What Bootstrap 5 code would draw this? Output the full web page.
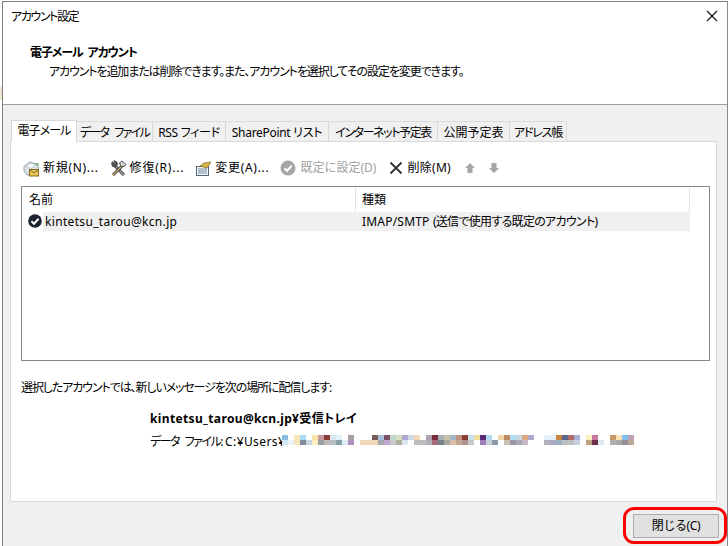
<!DOCTYPE html>
<html lang="ja"><head><meta charset="utf-8"><title>アカウント設定</title>
<link href="https://cdn.jsdelivr.net/npm/bootstrap@5.3.0/dist/css/bootstrap.min.css" rel="stylesheet">
<style>
html,body{margin:0;width:728px;height:546px;overflow:hidden;background:#fff}
body{font-family:"Noto Sans","Noto Sans CJK JP",sans-serif;font-size:12px;line-height:16px;color:#000;font-feature-settings:"palt";padding:1px 0 0 2px;position:relative}
.edge-tan{position:absolute;left:0;top:87px;width:2px;height:13px;background:#efe6d2}
.dlg{width:726px;height:545px;border:1px solid #7f7f7f;border-right-color:#8a8a8a;border-bottom:0;position:relative;background:#f0f0f0}
.dlg-head{height:103px;background:#fff;border-bottom:1px solid #a0a0a0;padding:7px 9px 0 8px}
.dlg-title{height:16px}
.dlg-title span{letter-spacing:-1.4px}
.x-btn{width:12px;height:12px;margin-top:1px}
.dlg-h{font-weight:700;margin:18px 0 0 19px;height:20px;line-height:20px;letter-spacing:-1.1px;word-spacing:3px}
.dlg-sub{margin:-1px 0 0 38px;height:20px;line-height:20px;letter-spacing:-1.1px;white-space:nowrap}
.tabs-wrap{padding:14px 10px 0 7px}
.nav-tabs.acct{border-bottom:0;height:22px;--bs-nav-tabs-border-width:0;align-items:flex-end;padding-left:1px;flex-wrap:nowrap}
.acct .nav-link{height:20px;padding:2px 0 0;text-align:center;color:#000;background:#f0f0f0;border:1px solid #d9d9d9;border-bottom:0;border-left:0;border-radius:0;margin:0;font-size:12px;line-height:18px;white-space:nowrap}
.acct .nav-link.active{height:22px;background:#fff;border:1px solid #d9d9d9;border-bottom:0;position:relative;z-index:2;margin-bottom:-1px;line-height:18px;padding-top:1px;color:#000}
.w1{width:66px;letter-spacing:-.9px}.w2{width:76px;letter-spacing:-1.6px;word-spacing:4px}.w3{width:73px;letter-spacing:-.3px}.w4{width:103px;letter-spacing:-.3px}.w5{width:109px;letter-spacing:-1.4px}.w6{width:72px}.w7{width:57px;letter-spacing:-1.2px}
.panel{height:361px;width:707px;background:#fff;border:1px solid #d9d9d9;padding:0 7px 0 10px}
.tools{height:44px;padding:8px 0 0 2px;align-items:center}
.tools .btn{--bs-btn-padding-x:0;--bs-btn-padding-y:0;--bs-btn-border-width:0;--bs-btn-font-size:12px;--bs-btn-line-height:16px;--bs-btn-color:#000;--bs-btn-disabled-color:#a0a0a0;--bs-btn-disabled-opacity:1;display:flex;align-items:center;gap:3px;border-radius:0;white-space:nowrap}
.tools svg{flex:none}
.mt1{margin-right:11px;letter-spacing:.7px}.mt2{margin-right:11px;letter-spacing:.8px}.mt3{margin-right:11px;letter-spacing:.7px}.mt4{margin-right:13px;gap:4px!important}.mt5{margin-right:14px;letter-spacing:.3px;gap:4px!important}.mt6{margin-right:14px}
.listbox{height:175px;width:689px;border:1px solid #828790}
.lb-row{height:25px;margin-right:19px}
.lb-c1{width:334px;padding:5px 0 0 7px;border-right:1px solid #e5e5e5;flex:none}
.lb-c2{flex:1;padding:5px 0 0 6px;border-right:1px solid #e5e5e5}
.lb-sel{height:19px;margin-right:19px;position:relative;line-height:19px}
.lb-ic{width:21px;flex:none;padding:2px 0 0 6px;background:#fff;height:19px}
.lb-c3{width:313px;flex:none;background:#f0f0f0;padding-left:2px;letter-spacing:.33px}
.lb-c4{flex:1;background:#f0f0f0;padding-left:6px;white-space:nowrap}
.ls-a{letter-spacing:.2px}.ls-b{letter-spacing:-.7px}
.deliv{margin:19px 0 0;height:16px;letter-spacing:-1.1px;white-space:nowrap}
.dest{margin:15px 0 0 129px}
.dest-b{font-weight:700;height:16px;letter-spacing:.35px;white-space:nowrap}
.dest-f{margin-top:7px;height:16px;white-space:nowrap;position:relative}
.ls-c{letter-spacing:-1.5px;word-spacing:4px}.ls-d{letter-spacing:.4px}
.blur{position:absolute;left:132px;top:-3px}
.foot{padding:12px 0 0 630px}
.btn.close-b{--bs-btn-bg:#e1e1e1;--bs-btn-border-color:#adadad;--bs-btn-color:#000;--bs-btn-padding-x:0;--bs-btn-padding-y:0;--bs-btn-font-size:12px;--bs-btn-line-height:22px;--bs-btn-border-radius:0;width:86px;height:24px;letter-spacing:-.4px}
.hl{position:absolute;left:620px;top:505px;width:104px;height:37px;border:3px solid #f00;border-radius:11px}
</style></head><body>
<div class="edge-tan"></div>
<div class="dlg">
  <div class="dlg-head">
    <div class="d-flex justify-content-between dlg-title"><span>アカウント設定</span>
      <svg class="x-btn" viewBox="0 0 12 12" aria-hidden="true"><path d="M1 1 11 11M11 1 1 11" stroke="#111" stroke-width="1.1" fill="none"/></svg></div>
    <div class="dlg-h">電子メール アカウント</div>
    <div class="dlg-sub">アカウントを追加または削除できます。また、アカウントを選択してその設定を変更できます。</div>
  </div>
  <div class="tabs-wrap">
    <ul class="nav nav-tabs acct">
      <li class="nav-item"><a class="nav-link active w1" href="#">電子メール</a></li>
      <li class="nav-item"><a class="nav-link w2" href="#">データ ファイル</a></li>
      <li class="nav-item"><a class="nav-link w3" href="#">RSS フィード</a></li>
      <li class="nav-item"><a class="nav-link w4" href="#">SharePoint リスト</a></li>
      <li class="nav-item"><a class="nav-link w5" href="#">インターネット予定表</a></li>
      <li class="nav-item"><a class="nav-link w6" href="#">公開予定表</a></li>
      <li class="nav-item"><a class="nav-link w7" href="#">アドレス帳</a></li>
    </ul>
    <div class="panel">
      <div class="d-flex tools">
        <button class="btn mt1" type="button"><svg width="17" height="17" viewBox="0 0 17 17"><path d="M1 6.500 7 2l7 2.500 1.500 3.500-5 7H4L1 11z" fill="#dde4e8" stroke="#98a3a9"/><path d="M2 6 8 3l5 2-5 3.500z" fill="#f6f8f9" stroke="#aeb7bb" stroke-width=".7"/><rect x="6.500" y="9.500" width="9" height="6.500" fill="#e8c85a" stroke="#8a6d1d"/><path d="M6.500 9.500l4.500 3.500 4.500-3.500" fill="none" stroke="#7d611a"/><path d="M12.500 3.500h2.500v2.500" stroke="#5cae5c" fill="none"/></svg>新規(N)...</button>
        <button class="btn mt2" type="button"><svg width="17" height="17" viewBox="0 0 17 17"><path d="M5 6 14 15" stroke="#333" stroke-width="3"/><path d="M5 6 14 15" stroke="#a8a8a8" stroke-width="1.300"/><path d="M1.500 3 3 1.500 4 4l1-1-1-2.500L7 2l.5 3L5.500 7 2.500 6.500z" fill="#555" stroke="#222" stroke-width=".6"/><path d="M3 15 12 6" stroke="#333" stroke-width="3"/><path d="M3 15 12 6" stroke="#d0b070" stroke-width="1.300"/><path d="M9 3.500 12 1l4 3.500-2 2.500-1-1-1 1-2-2 .5-1z" fill="#d4d4d4" stroke="#333" stroke-width=".8"/></svg>修復(R)...</button>
        <button class="btn mt3" type="button"><svg width="17" height="17" viewBox="0 0 17 17"><rect x="1.500" y="6.500" width="12" height="9" fill="#f3f6f8" stroke="#567"/><path d="M3 9h9M3 11h9M3 13h9" stroke="#6d8aa5"/><path d="M5 6l4-3 7-1-4 6z" fill="#d7b44a" stroke="#7c6720" stroke-width=".7"/></svg>変更(A)...</button>
        <button class="btn mt4" type="button" disabled><svg width="16" height="16" viewBox="0 0 16 16"><circle cx="8" cy="8" r="7.500" fill="#a6a6a6"/><path d="M4.300 8.200 7 10.800l4.700-5" stroke="#fff" stroke-width="2" fill="none"/></svg>既定に設定(D)</button>
        <button class="btn mt5" type="button"><svg width="14" height="14" viewBox="0 0 14 14"><path d="M1.500 1.500l11 11M12.500 1.500l-11 11" stroke="#333" stroke-width="1.900" fill="none"/></svg>削除(M)</button>
        <button class="btn mt6" type="button" disabled><svg width="10" height="10" viewBox="0 0 10 10"><path d="M5 0 10 5H7.500V10h-5V5H0z" fill="#a6a6a6"/></svg></button>
        <button class="btn" type="button" disabled><svg width="10" height="10" viewBox="0 0 10 10"><path d="M5 10 10 5H7.500V0h-5V5H0z" fill="#a6a6a6"/></svg></button>
      </div>
      <div class="listbox">
        <div class="d-flex lb-row"><div class="lb-c1">名前</div><div class="lb-c2">種類</div></div>
        <div class="d-flex lb-sel">
          <div class="lb-ic"><svg class="d-block" width="14" height="14" viewBox="0 0 14 14"><circle cx="7" cy="7" r="6.800" fill="#1c2230"/><path d="M3.400 7.200 6 9.700l4.600-5" stroke="#fff" stroke-width="2" fill="none"/></svg></div>
          <div class="lb-c3">kintetsu_tarou@kcn.jp</div>
          <div class="lb-c4"><span class="ls-a">IMAP/SMTP </span><span class="ls-b">(送信で使用する既定のアカウント)</span></div>
        </div>
      </div>
      <div class="deliv">選択したアカウントでは、新しいメッセージを次の場所に配信します:</div>
      <div class="dest">
        <div class="dest-b">kintetsu_tarou@kcn.jp¥受信トレイ</div>
        <div class="dest-f"><span class="ls-c">データ ファイル:</span> <span class="ls-d">C:¥Users¥</span>
          <svg class="blur" width="352" height="18" viewBox="0 0 352 18" shape-rendering="crispEdges" aria-hidden="true">
            <g transform="translate(0,4)"><rect x="0" width="6" height="5" fill="#8ebfe2"/><rect x="12" width="6" height="5" fill="#f7e6b8"/><rect x="18" width="6" height="5" fill="#a9ddf7"/><rect x="30" width="6" height="5" fill="#f9e3a8"/><rect x="36" width="6" height="5" fill="#c89aa0"/><rect x="42" width="6" height="5" fill="#8b3a3a"/><rect x="48" width="6" height="5" fill="#d8e8f0"/><rect x="54" width="6" height="5" fill="#e0f0f8"/><rect x="66" width="6" height="5" fill="#a8a0a0"/><rect x="90" width="6" height="5" fill="#7d5a5a"/><rect x="96" width="6" height="5" fill="#a8c0d8"/><rect x="102" width="6" height="5" fill="#7a5068"/><rect x="108" width="6" height="5" fill="#bcd8c8"/><rect x="114" width="6" height="5" fill="#d8e0c0"/><rect x="120" width="6" height="5" fill="#b0a8d0"/><rect x="126" width="6" height="5" fill="#d0d8e8"/><rect x="132" width="6" height="5" fill="#f0d8b8"/><rect x="144" width="6" height="5" fill="#b0a0b0"/><rect x="150" width="6" height="5" fill="#7a2a3a"/><rect x="156" width="6" height="5" fill="#a8b0b8"/><rect x="162" width="6" height="5" fill="#c8c0a8"/><rect x="168" width="6" height="5" fill="#a0b8c8"/><rect x="174" width="6" height="5" fill="#c09080"/><rect x="180" width="6" height="5" fill="#8a4030"/><rect x="186" width="6" height="5" fill="#c8e0f0"/><rect x="192" width="6" height="5" fill="#f0e0a0"/><rect x="198" width="6" height="5" fill="#5a2a78"/><rect x="204" width="6" height="5" fill="#b0d8f0"/><rect x="216" width="6" height="5" fill="#f2d8a8"/><rect x="222" width="6" height="5" fill="#c08a60"/><rect x="228" width="6" height="5" fill="#b0ddf5"/><rect x="234" width="6" height="5" fill="#c8d8e0"/><rect x="240" width="6" height="5" fill="#d8a880"/><rect x="246" width="6" height="5" fill="#b0a8c8"/><rect x="262" width="6" height="5" fill="#e0f0fa"/><rect x="268" width="6" height="5" fill="#e8f0fa"/><rect x="274" width="6" height="5" fill="#c8853e"/><rect x="280" width="6" height="5" fill="#5a6890"/><rect x="286" width="6" height="5" fill="#b06a6a"/><rect x="292" width="6" height="5" fill="#a8b0d8"/><rect x="304" width="6" height="5" fill="#fbf0c0"/><rect x="310" width="6" height="5" fill="#c878a0"/><rect x="328" width="6" height="5" fill="#c8976a"/><rect x="334" width="6" height="5" fill="#fbe0b8"/><rect x="340" width="6" height="5" fill="#80c0f0"/><rect x="346" width="6" height="5" fill="#c0a0b8"/></g>
            <g transform="translate(0,9)"><rect x="0" width="6" height="5" fill="#cfe8f5"/><rect x="6" width="6" height="5" fill="#e8f4fa"/><rect x="12" width="6" height="5" fill="#f7e4b4"/><rect x="18" width="6" height="5" fill="#7e8ea0"/><rect x="24" width="6" height="5" fill="#c8d8e0"/><rect x="30" width="6" height="5" fill="#ffedc0"/><rect x="36" width="6" height="5" fill="#9c9ca4"/><rect x="42" width="6" height="5" fill="#c0b8b8"/><rect x="48" width="6" height="5" fill="#b8c0c4"/><rect x="54" width="6" height="5" fill="#88a0a8"/><rect x="60" width="6" height="5" fill="#dfeef5"/><rect x="66" width="6" height="5" fill="#b090c0"/><rect x="78" width="18" height="5" fill="#f0d8b8"/><rect x="96" width="6" height="5" fill="#a8a8b0"/><rect x="102" width="6" height="5" fill="#c0a8d0"/><rect x="108" width="6" height="5" fill="#c8c8c8"/><rect x="114" width="6" height="5" fill="#b0b0a0"/><rect x="120" width="6" height="5" fill="#dce8f0"/><rect x="132" width="12" height="5" fill="#bdbdbd"/><rect x="144" width="6" height="5" fill="#aeb0b8"/><rect x="150" width="6" height="5" fill="#a86a78"/><rect x="156" width="6" height="5" fill="#788088"/><rect x="162" width="6" height="5" fill="#a8a8a0"/><rect x="168" width="6" height="5" fill="#d8c0a8"/><rect x="174" width="6" height="5" fill="#c0a890"/><rect x="180" width="6" height="5" fill="#b09090"/><rect x="186" width="6" height="5" fill="#c8c8c8"/><rect x="198" width="6" height="5" fill="#a080b8"/><rect x="204" width="6" height="5" fill="#c8d0d8"/><rect x="210" width="6" height="5" fill="#8a98a8"/><rect x="222" width="6" height="5" fill="#c8c0b0"/><rect x="228" width="6" height="5" fill="#9898a8"/><rect x="234" width="6" height="5" fill="#a8a8b8"/><rect x="240" width="6" height="5" fill="#c8b8c8"/><rect x="262" width="6" height="5" fill="#b0b0b8"/><rect x="268" width="6" height="5" fill="#a8a8c0"/><rect x="274" width="6" height="5" fill="#9cb0c0"/><rect x="280" width="12" height="5" fill="#bcc0c0"/><rect x="292" width="6" height="5" fill="#c8d0e0"/><rect x="304" width="6" height="5" fill="#b8a080"/><rect x="310" width="6" height="5" fill="#6e3048"/><rect x="316" width="6" height="5" fill="#e0e8f0"/><rect x="328" width="6" height="5" fill="#b0b0b0"/><rect x="334" width="6" height="5" fill="#a8a8a8"/><rect x="340" width="6" height="5" fill="#989098"/><rect x="346" width="6" height="5" fill="#b8a898"/></g>
          </svg></div>
      </div>
    </div>
  </div>
  <div class="foot"><button class="btn close-b" type="button">閉じる(C)</button></div>
  <div class="hl"></div>
</div>
<script src="https://cdn.jsdelivr.net/npm/bootstrap@5.3.0/dist/js/bootstrap.bundle.min.js"></script>
</body></html>
